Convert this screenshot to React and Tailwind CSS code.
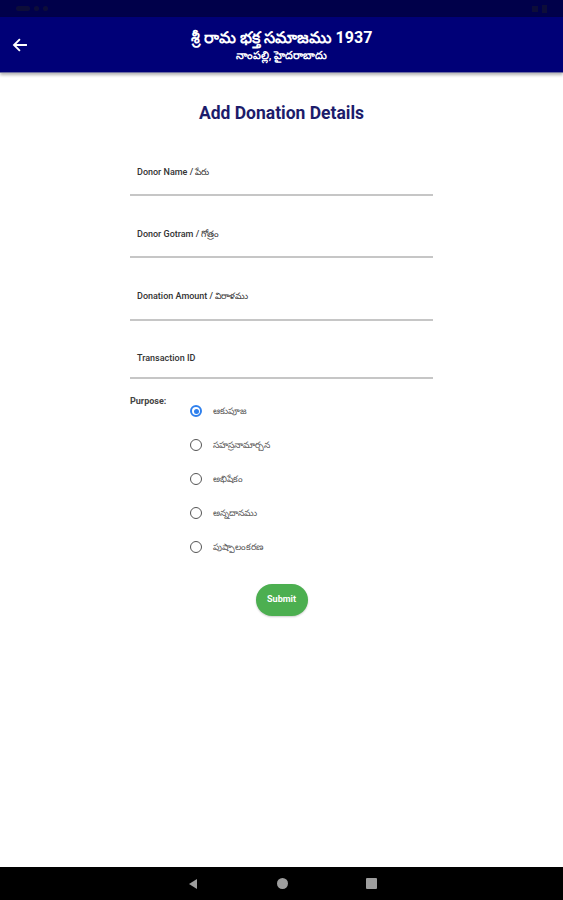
import React from "react";

const options = ["ఆకుపూజ", "సహస్రనామార్చన", "అభిషేకం", "అన్నదానము", "పుష్పాలంకరణ"];
const fields = [
  { label: "Donor Name / పేరు", cls: "h-[62px] pb-[17px]" },
  { label: "Donor Gotram / గోత్రం", cls: "h-[62px] pb-[17px]" },
  { label: "Donation Amount / విరాళము", cls: "h-[63px] pb-[18px]" },
  { label: "Transaction ID", cls: "h-[58px] pb-[14px]" },
];

export default function App() {
  return (
    <div
      className="w-[563px] h-[900px] flex flex-col bg-white overflow-hidden"
      style={{ fontFamily: "Roboto, 'Noto Sans', 'Liberation Sans', sans-serif" }}
    >
      {/* status bar */}
      <div className="h-[17px] bg-[#00004a] flex items-center justify-between px-4">
        <div className="flex items-center gap-1 opacity-40">
          <div className="w-[14px] h-[5px] bg-[#222] rounded-sm" />
          <div className="w-[5px] h-[5px] bg-[#222] rounded-sm" />
          <div className="w-[5px] h-[5px] bg-[#222] rounded-sm" />
        </div>
        <div className="flex items-center gap-1 opacity-40">
          <div className="w-[6px] h-[6px] bg-[#222]" />
          <div className="w-[5px] h-[8px] bg-[#222]" />
        </div>
      </div>
      {/* app bar */}
      <div className="h-[56px] bg-[#000077] flex items-center relative shadow-[0_2px_3px_rgba(0,0,0,0.3)] border-b border-[#6f6fa0]">
        <div className="absolute left-[11px] top-[19px]">
          <svg width="18" height="18" viewBox="0 0 24 24" fill="none" stroke="white" strokeWidth="2.5" strokeLinecap="square">
            <path d="M20 12H5M11 5l-7 7 7 7" />
          </svg>
        </div>
        <div className="flex-1 flex flex-col items-center">
          <div className="text-white font-bold text-[16px] leading-[22px]">శ్రీ రామ భక్త సమాజము 1937</div>
          <div className="text-white font-semibold text-[11px] leading-[14px]">నాంపల్లి, హైదరాబాదు</div>
        </div>
      </div>

      {/* content */}
      <div className="flex-1 flex flex-col items-center">
        <div className="mt-[28px] text-[17.5px] font-bold text-[#1c1c6b] leading-[24px]">Add Donation Details</div>

        <div className="w-[303px] mt-[9px] flex flex-col">
          {fields.map((f) => (
            <div
              key={f.label}
              className={`${f.cls} border-b-2 border-[#c6c6c6] flex items-end pl-[7px]`}
            >
              <span className="text-[9px] font-medium text-[#333] leading-none">{f.label}</span>
            </div>
          ))}
        </div>

        <div className="w-[303px] mt-[18px] flex">
          <div className="text-[9px] font-bold text-[#444] w-[60px] leading-none">Purpose:</div>
          <div className="flex flex-col gap-[22px] pt-[8px]">
            {options.map((o, i) => (
              <div key={o} className="flex items-center h-[12px]">
                {i === 0 ? (
                  <div className="w-[12px] h-[12px] rounded-full border-[2px] border-[#2f80ed] flex items-center justify-center">
                    <div className="w-[5px] h-[5px] rounded-full bg-[#2f80ed]" />
                  </div>
                ) : (
                  <div className="w-[12px] h-[12px] rounded-full border-[1.5px] border-[#555]" />
                )}
                <span className="ml-[11px] text-[9px] text-[#555] leading-none">{o}</span>
              </div>
            ))}
          </div>
        </div>

        <button className="mt-[31px] w-[52px] h-[32px] rounded-full bg-[#4caf50] text-white text-[9px] font-bold shadow-[0_1px_2px_rgba(0,0,0,0.2)]">
          Submit
        </button>
      </div>

      {/* nav bar */}
      <div className="h-[33px] bg-black flex items-center justify-center">
        <div className="flex items-center gap-[78px]">
          <svg width="12" height="12" viewBox="0 0 12 12">
            <path d="M10 1 L2 6 L10 11 Z" fill="#9e9e9e" />
          </svg>
          <div className="w-[11px] h-[11px] rounded-full bg-[#9e9e9e]" />
          <div className="w-[11px] h-[11px] rounded-[1px] bg-[#9e9e9e]" />
        </div>
      </div>
    </div>
  );
}
